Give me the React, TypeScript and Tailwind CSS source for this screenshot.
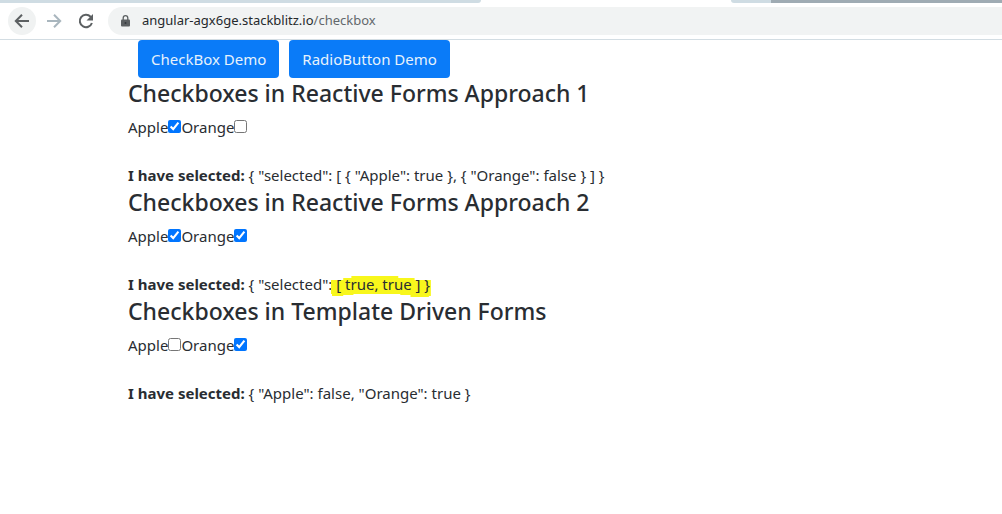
import { useState, type ReactNode } from 'react';

type Fruit = 'Apple' | 'Orange';
type Selection = Record<Fruit, boolean>;

const FRUITS: Fruit[] = ['Apple', 'Orange'];

function TabStrip() {
  return (
    <div className="flex h-[3px] w-full justify-between bg-white" aria-hidden="true">
      <div className="w-[48%] rounded-br-sm bg-[#cfdce3]" />
      <div className="flex w-[27%]">
        <div className="w-10 rounded-bl-sm bg-[#cfdce3]" />
        <div className="flex-1 bg-[#9fabb3]" />
      </div>
    </div>
  );
}

function AddressBar() {
  return (
    <nav className="flex h-9 items-center pb-px pl-2" aria-label="Browser">
      <button type="button" aria-label="Back" className="flex size-7 items-center justify-center rounded-full bg-[#f0f2f2]">
        <svg viewBox="0 0 16 16" className="size-4" fill="none" stroke="#5c6062" strokeWidth="2">
          <path d="M15 8H2.5M8 1.8 1.8 8 8 14.2" />
        </svg>
      </button>
      <button type="button" aria-label="Forward" className="ml-1 flex size-7 items-center justify-center rounded-full">
        <svg viewBox="0 0 16 16" className="size-4" fill="none" stroke="#a9b6be" strokeWidth="2">
          <path d="M1 8h12.5M8 1.8 14.2 8 8 14.2" />
        </svg>
      </button>
      <button type="button" aria-label="Reload" className="ml-1 flex size-7 items-center justify-center rounded-full">
        <svg viewBox="0 0 16 16" className="size-4" fill="none" stroke="#5c6062" strokeWidth="2">
          <path d="M13.9 10A6.2 6.2 0 1 1 12.6 3.8L13.5 4.8" />
          <path d="M15 1v6.5H8.5z" fill="#5c6062" stroke="none" />
        </svg>
      </button>
      <div className="ml-2 flex h-7 flex-1 items-center rounded-l-full bg-[#f1f3f3] pl-[13px] text-[13px]">
        <svg viewBox="0 0 9 12" className="mr-3 h-3 w-[9px]" aria-hidden="true">
          <path d="M2.2 5V3a2.3 2.3 0 0 1 4.6 0v2" fill="none" stroke="#5c6062" strokeWidth="1.3" />
          <rect y="4.4" width="9" height="7.2" rx="1" fill="#5c6062" />
          <circle cx="4.5" cy="8" r="1" fill="#353a3d" />
        </svg>
        <span className="text-[#25292c]">angular-agx6ge.stackblitz.io</span>
        <span className="text-[#62686c]">/checkbox</span>
      </div>
    </nav>
  );
}

function Highlight({ children }: { children: ReactNode }) {
  return (
    <span className="relative isolate">
      <svg
        viewBox="0 0 98 22"
        preserveAspectRatio="none"
        className="absolute top-0.5 -left-[5px] -z-10 h-[22px] w-[calc(100%+6px)]"
        aria-hidden="true"
      >
        <path d="M0 4H12V2H20V0H66V2H82V4H98V20H96V21H78V19H68V18H22V19H12V20H1V18H0Z" fill="#f8f71c" />
      </svg>
      {children}
    </span>
  );
}

interface SectionProps {
  id: string;
  title: string;
  initial: Selection;
  render: (value: Selection) => ReactNode;
}

function CheckboxSection({ id, title, initial, render }: SectionProps) {
  const [value, setValue] = useState(initial);
  return (
    <section className="mb-px">
      <h4 className="mb-[7px] text-[23px] leading-[29px] font-medium">{title}</h4>
      <form className="mb-6 flex h-6 items-center">
        {FRUITS.map((fruit) => (
          <div key={fruit} className="flex items-center">
            <label htmlFor={`${id}-${fruit}`}>{fruit}</label>
            <input
              id={`${id}-${fruit}`}
              type="checkbox"
              className="mb-px size-[13px]"
              checked={value[fruit]}
              onChange={(e) => setValue({ ...value, [fruit]: e.target.checked })}
            />
          </div>
        ))}
      </form>
      <p className="leading-6">
        <b className="font-bold">I have selected:</b> {render(value)}
      </p>
    </section>
  );
}

function DemoLink({ href, children }: { href: string; children: ReactNode }) {
  return (
    <a href={href} className="rounded-sm bg-[#0a7bf8] px-[13px] py-[7px] leading-6 text-[#e6f2fc]">
      {children}
    </a>
  );
}

export default function App() {
  return (
    <div className="min-h-screen bg-white font-['Noto_Sans','Open_Sans',sans-serif] text-[15px] text-[#292d32]">
      <header className="border-b border-[#d3dde3]">
        <TabStrip />
        <AddressBar />
      </header>
      <main className="px-32">
        <div className="mb-px flex gap-[10px] pl-[10px]">
          <DemoLink href="#checkbox">CheckBox Demo</DemoLink>
          <DemoLink href="#radio">RadioButton Demo</DemoLink>
        </div>
        <CheckboxSection
          id="first"
          title="Checkboxes in Reactive Forms Approach 1"
          initial={{ Apple: true, Orange: false }}
          render={(v) => `{ "selected": [ { "Apple": ${v.Apple} }, { "Orange": ${v.Orange} } ] }`}
        />
        <CheckboxSection
          id="second"
          title="Checkboxes in Reactive Forms Approach 2"
          initial={{ Apple: true, Orange: true }}
          render={(v) => (
            <>
              {'{ "selected": '}
              <Highlight>{`[ ${v.Apple}, ${v.Orange} ] }`}</Highlight>
            </>
          )}
        />
        <CheckboxSection
          id="third"
          title="Checkboxes in Template Driven Forms"
          initial={{ Apple: false, Orange: true }}
          render={(v) => `{ "Apple": ${v.Apple}, "Orange": ${v.Orange} }`}
        />
      </main>
    </div>
  );
}
